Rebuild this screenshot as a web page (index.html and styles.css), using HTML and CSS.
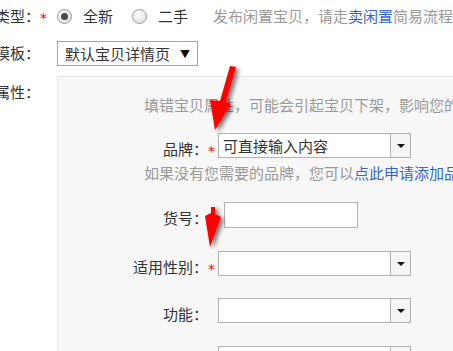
FILE: index.html
```html
<!DOCTYPE html>
<html lang="zh-CN">
<head>
    <meta charset="UTF-8">
    <title>发布宝贝</title>
    <link rel="stylesheet" href="styles.css">
</head>
<body>
    <div class="form">
        <div class="row">
            <span class="label">类型：</span><span class="req">*</span>
            <span class="radio checked"></span><span class="opt">全新</span>
            <span class="radio"></span><span class="opt opt-last">二手</span>
            <span class="tip">发布闲置宝贝，请走<a href="#">卖闲置</a>简易流程</span>
        </div>

        <div class="row row-tpl">
            <span class="label">模板：</span><span class="req"></span>
            <div class="tpl-select">
                <span>默认宝贝详情页</span>
                <span class="tpl-caret">▼</span>
            </div>
        </div>

        <div class="row row-attr">
            <span class="label label-attr">属性：</span><span class="req"></span>

            <!-- 属性面板 -->
            <div class="panel">
                <div class="hint">填错宝贝属性，可能会引起宝贝下架，影响您的正常销售</div>

                <div class="prow prow-brand">
                    <span class="plabel">品牌：</span><span class="preq">*</span>
                    <div class="combo">
                        <span class="combo-text">可直接输入内容</span>
                        <span class="combo-btn"><i class="caret"></i></span>
                    </div>
                </div>
                <div class="hint hint-brand">如果没有您需要的品牌，您可以<a href="#">点此申请添加品牌</a></div>

                <div class="prow prow-code">
                    <span class="plabel">货号：</span><span class="preq"></span>
                    <input class="text-input" type="text">
                </div>

                <div class="prow prow-gender">
                    <span class="plabel">适用性别：</span><span class="preq">*</span>
                    <div class="combo">
                        <span class="combo-text"></span>
                        <span class="combo-btn"><i class="caret"></i></span>
                    </div>
                </div>

                <div class="prow prow-func">
                    <span class="plabel">功能：</span><span class="preq"></span>
                    <div class="combo">
                        <span class="combo-text"></span>
                        <span class="combo-btn"><i class="caret"></i></span>
                    </div>
                </div>

                <div class="prow prow-more">
                    <span class="plabel"></span><span class="preq"></span>
                    <div class="combo">
                        <span class="combo-text"></span>
                        <span class="combo-btn"><i class="caret"></i></span>
                    </div>
                </div>
            </div>
        </div>
    </div>

    <!-- 标注箭头 -->
    <svg class="marks" width="453" height="351" viewBox="0 0 453 351">
        <defs>
            <filter id="shadow" x="-50%" y="-50%" width="200%" height="200%">
                <feDropShadow dx="3" dy="2" stdDeviation="2" flood-color="#000" flood-opacity="0.55"/>
            </filter>
        </defs>
        <g fill="#f00" filter="url(#shadow)">
            <polygon points="230,66 236,67 226,102 231,104 215,130 210,100 220,101"/>
            <polygon points="211,207 215,207 215,214 221,217 210,247 205,216 211,213"/>
        </g>
    </svg>
</body>
</html>
```

FILE: styles.css
```css
body {
    margin: 0;
    font-family: "Noto Sans CJK SC", "Noto Sans", sans-serif;
    font-size: 15px;
    color: #333;
    background: #fff;
    overflow: hidden;
    width: 453px;
    height: 351px;
}
a {
    color: #3366cc;
    text-decoration: none;
}
.form {
    white-space: nowrap;
}
.row {
    display: flex;
    align-items: center;
    height: 32px;
}
.label {
    flex: none;
    width: 45px;
    margin-left: -5px;
    text-align: right;
    line-height: 20px;
}
.req {
    flex: none;
    width: 17px;
    color: #f00;
    font-family: "DejaVu Sans", sans-serif;
    font-size: 14px;
    line-height: 20px;
    padding-top: 4px;
}
.radio {
    flex: none;
    display: flex;
    align-items: center;
    justify-content: center;
    width: 13px;
    height: 13px;
    border: 1px solid #9c9c9c;
    border-radius: 50%;
    background: radial-gradient(circle at 40% 35%, #fff, #d6d6d6);
    margin-right: 11px;
}
.radio.checked::after {
    content: '';
    width: 7px;
    height: 7px;
    border-radius: 50%;
    background: #4a4a4a;
}
.opt {
    line-height: 20px;
    margin-right: 19px;
}
.opt-last {
    margin-right: 25px;
}
.tip {
    color: #999;
    line-height: 20px;
}
.row-tpl {
    margin-top: 5px;
}
.tpl-select {
    display: flex;
    align-items: center;
    box-sizing: border-box;
    width: 141px;
    height: 25px;
    border: 1px solid #a5a5a5;
    background: #fff;
    padding-left: 7px;
}
.tpl-caret {
    margin-left: auto;
    padding-right: 7px;
    font-size: 10px;
    color: #111;
}
.row-attr {
    margin-top: 7px;
    height: auto;
    align-items: flex-start;
}
.label-attr {
    padding-top: 6px;
}
/* 属性面板 */
.panel {
    flex: none;
    width: 520px;
    height: 400px;
    border: 1px solid #e6e6e6;
    background: #f7f7f7;
    padding-top: 18px;
}
.hint {
    padding-left: 86px;
    line-height: 20px;
    color: #999;
}
.hint-brand {
    margin-top: 5px;
}
.prow {
    display: flex;
    align-items: center;
    height: 25px;
}
.plabel {
    flex: none;
    width: 150px;
    text-align: right;
    line-height: 20px;
    padding-top: 6px;
}
.preq {
    flex: none;
    width: 10px;
    color: #f00;
    font-family: "DejaVu Sans", sans-serif;
    font-size: 14px;
    line-height: 20px;
    padding-top: 10px;
}
.prow-brand { margin-top: 18px; }
.prow-code { margin-top: 19px; height: 26px; }
.prow-gender { margin-top: 23px; }
.prow-func { margin-top: 22px; }
.prow-more { margin-top: 23px; }
.combo {
    display: flex;
    box-sizing: border-box;
    width: 193px;
    height: 25px;
    border: 1px solid #b2b2b2;
    background: #fff;
}
.combo-text {
    flex: 1;
    padding-left: 4px;
    line-height: 23px;
    color: #333;
}
.combo-btn {
    flex: none;
    display: flex;
    align-items: center;
    justify-content: center;
    width: 19px;
    border-left: 1px solid #b2b2b2;
    background: #f5f5f5;
}
.caret {
    width: 0;
    height: 0;
    border-left: 4px solid transparent;
    border-right: 4px solid transparent;
    border-top: 4px solid #111;
}
.text-input {
    box-sizing: border-box;
    margin: 0 0 0 6px;
    width: 134px;
    height: 26px;
    border: 1px solid #b2b2b2;
    background: #fff;
    padding: 0;
}
.marks {
    position: absolute;
    left: 0;
    top: 0;
    pointer-events: none;
}
```
